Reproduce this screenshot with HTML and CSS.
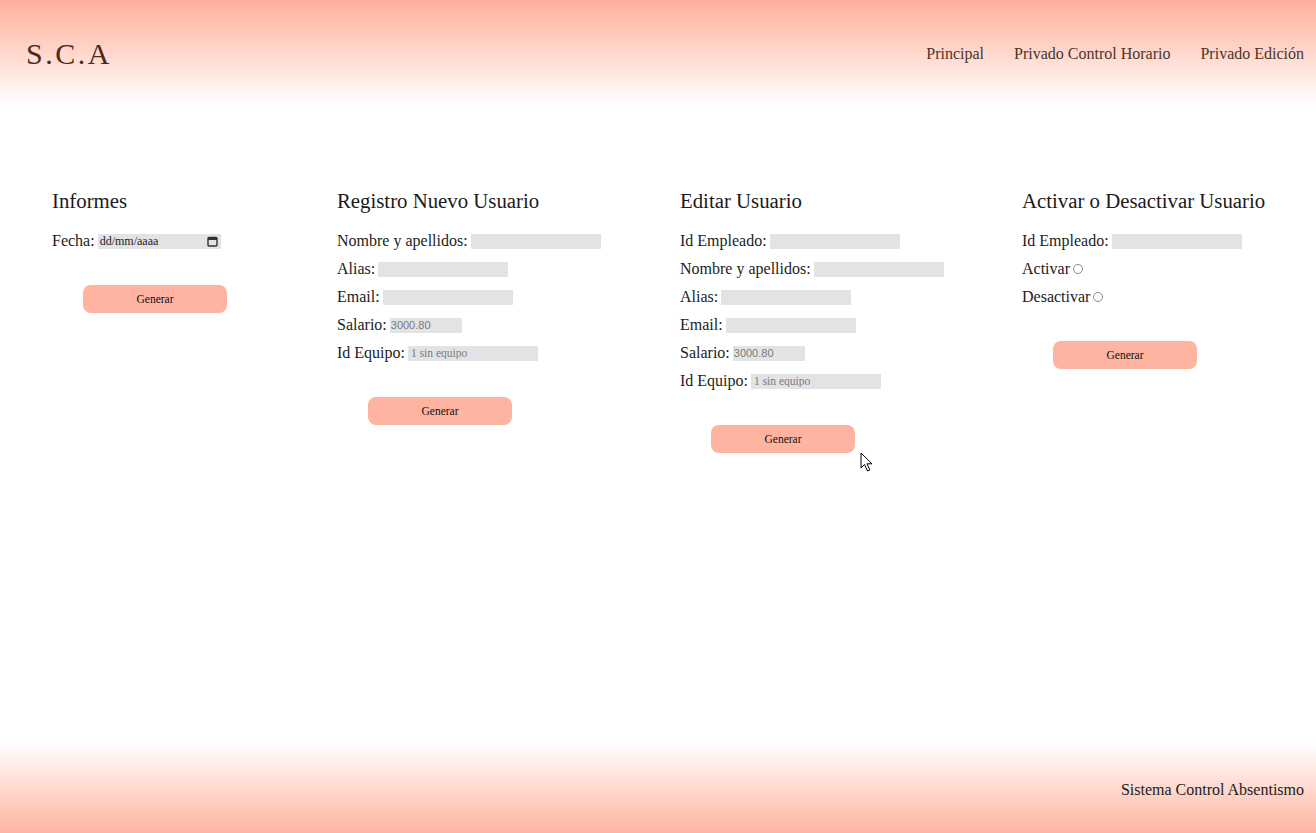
FILE: index.html
```html
<!DOCTYPE html>
<html lang="es">
<head>
<meta charset="utf-8">
<title>S.C.A</title>
<link rel="stylesheet" href="styles.css">
</head>
<body>
<header class="top">
  <div class="logo">S.C.A</div>
  <nav class="nav">
    <a href="#">Principal</a>
    <a href="#">Privado Control Horario</a>
    <a href="#">Privado Edición</a>
  </nav>
</header>
<main class="panels">
  <section class="panel p1">
    <h2>Informes</h2>
    <div class="row">Fecha:<span class="date"><span>dd/mm/aaaa</span><svg width="11" height="11" viewBox="0 0 11 11"><rect x="1" y="1.5" width="9" height="8.5" rx="1" fill="none" stroke="#333" stroke-width="1.4"/><rect x="1" y="1.5" width="9" height="2.5" fill="#333"/></svg></span></div>
    <button class="btn">Generar</button>
  </section>
  <section class="panel p2">
    <h2>Registro Nuevo Usuario</h2>
    <div class="row">Nombre y apellidos:<input class="field" type="text"></div>
    <div class="row">Alias:<input class="field" type="text"></div>
    <div class="row">Email:<input class="field" type="text"></div>
    <div class="row">Salario:<input class="field short sans" type="text" placeholder="3000.80"></div>
    <div class="row">Id Equipo:<input class="field" type="text" placeholder="1 sin equipo"></div>
    <button class="btn">Generar</button>
  </section>
  <section class="panel p3">
    <h2>Editar Usuario</h2>
    <div class="row">Id Empleado:<input class="field" type="text"></div>
    <div class="row">Nombre y apellidos:<input class="field" type="text"></div>
    <div class="row">Alias:<input class="field" type="text"></div>
    <div class="row">Email:<input class="field" type="text"></div>
    <div class="row">Salario:<input class="field short sans" type="text" placeholder="3000.80"></div>
    <div class="row">Id Equipo:<input class="field" type="text" placeholder="1 sin equipo"></div>
    <button class="btn">Generar</button>
  </section>
  <section class="panel p4">
    <h2>Activar o Desactivar Usuario</h2>
    <div class="row">Id Empleado:<input class="field" type="text"></div>
    <div class="row">Activar<span class="radio"></span></div>
    <div class="row">Desactivar<span class="radio"></span></div>
    <button class="btn">Generar</button>
  </section>
  <svg class="cursor" width="14" height="21" viewBox="0 0 14 21"><path d="M1 1 L1 16 L4.5 12.5 L7.5 19 L9.8 18 L7 11.8 L12 11.8 Z" fill="#fff" stroke="#000" stroke-width="1" stroke-linejoin="round"/></svg>
</main>
<footer class="bottom">Sistema Control Absentismo</footer>
</body>
</html>
```
FILE: styles.css
```css
html, body {
  margin: 0;
  padding: 0;
}
body {
  font-family: "Liberation Serif", "Times New Roman", serif;
  color: #1c1c1c;
  background: #fff;
  min-height: 833px;
  display: flex;
  flex-direction: column;
}
.top {
  height: 105px;
  display: flex;
  align-items: center;
  justify-content: space-between;
  padding: 0 12px 0 26px;
  background: linear-gradient(to bottom, #ffaf9b 0%, #ffd3c8 45%, #ffffff 100%);
}
.logo {
  font-size: 30px;
  letter-spacing: 2.5px;
  color: #4a2c18;
  padding-top: 2px;
}
.nav {
  display: flex;
  gap: 30px;
  padding-top: 3px;
}
.nav a {
  font-size: 16px;
  color: #4d3426;
  text-decoration: none;
}
.panels {
  flex: 1;
  position: relative;
  display: flex;
  padding: 84px 0 0 52px;
}
.panel h2 {
  margin: 0 0 14px 0;
  font-size: 20.8px;
  font-weight: normal;
  line-height: 24px;
  color: #1a1a1a;
  white-space: nowrap;
}
.p1 { width: 285px; }
.p2 { width: 343px; }
.p3 { width: 342px; }
.p4 { flex: 1; }
.row {
  height: 28px;
  display: flex;
  align-items: center;
  font-size: 16px;
  white-space: nowrap;
}
.field {
  box-sizing: border-box;
  width: 130px;
  height: 15px;
  margin: 0 0 0 3px;
  padding: 0 3px;
  border: none;
  background: #e2e3e5;
  font-family: "Liberation Serif", serif;
  font-size: 11.5px;
  outline: none;
}
.field::placeholder {
  color: #7a7a7a;
}
.field.short {
  width: 72px;
  padding-left: 1px;
}
.field.sans {
  font-family: "Liberation Sans", Arial, sans-serif;
  font-size: 11px;
}
.date {
  box-sizing: border-box;
  width: 123px;
  height: 15px;
  margin-left: 3px;
  padding: 0 3px 0 2px;
  background: #e2e3e5;
  display: flex;
  align-items: center;
  justify-content: space-between;
  font-size: 12px;
  color: #222;
}
.date svg { display: block; }
.radio {
  box-sizing: border-box;
  width: 10px;
  height: 10px;
  border: 1px solid #8a8a8a;
  border-radius: 50%;
  margin-left: 3px;
  margin-bottom: 1px;
  background: #fff;
}
.btn {
  display: block;
  width: 144px;
  height: 28px;
  margin: 30px 0 0 31px;
  border: none;
  border-radius: 8px;
  background: #ffb3a1;
  color: #111;
  font-family: "Liberation Serif", serif;
  font-size: 11.5px;
  padding: 0 0 1px 0;
}
.cursor {
  position: absolute;
  left: 860px;
  top: 347px;
}
.bottom {
  height: 90px;
  box-sizing: border-box;
  display: flex;
  align-items: center;
  justify-content: flex-end;
  padding: 4px 12px 0 0;
  font-size: 16px;
  color: #1c1c1c;
  background: linear-gradient(to bottom, #ffffff 0%, #ffd9cf 50%, #ffb4a2 100%);
}
```
